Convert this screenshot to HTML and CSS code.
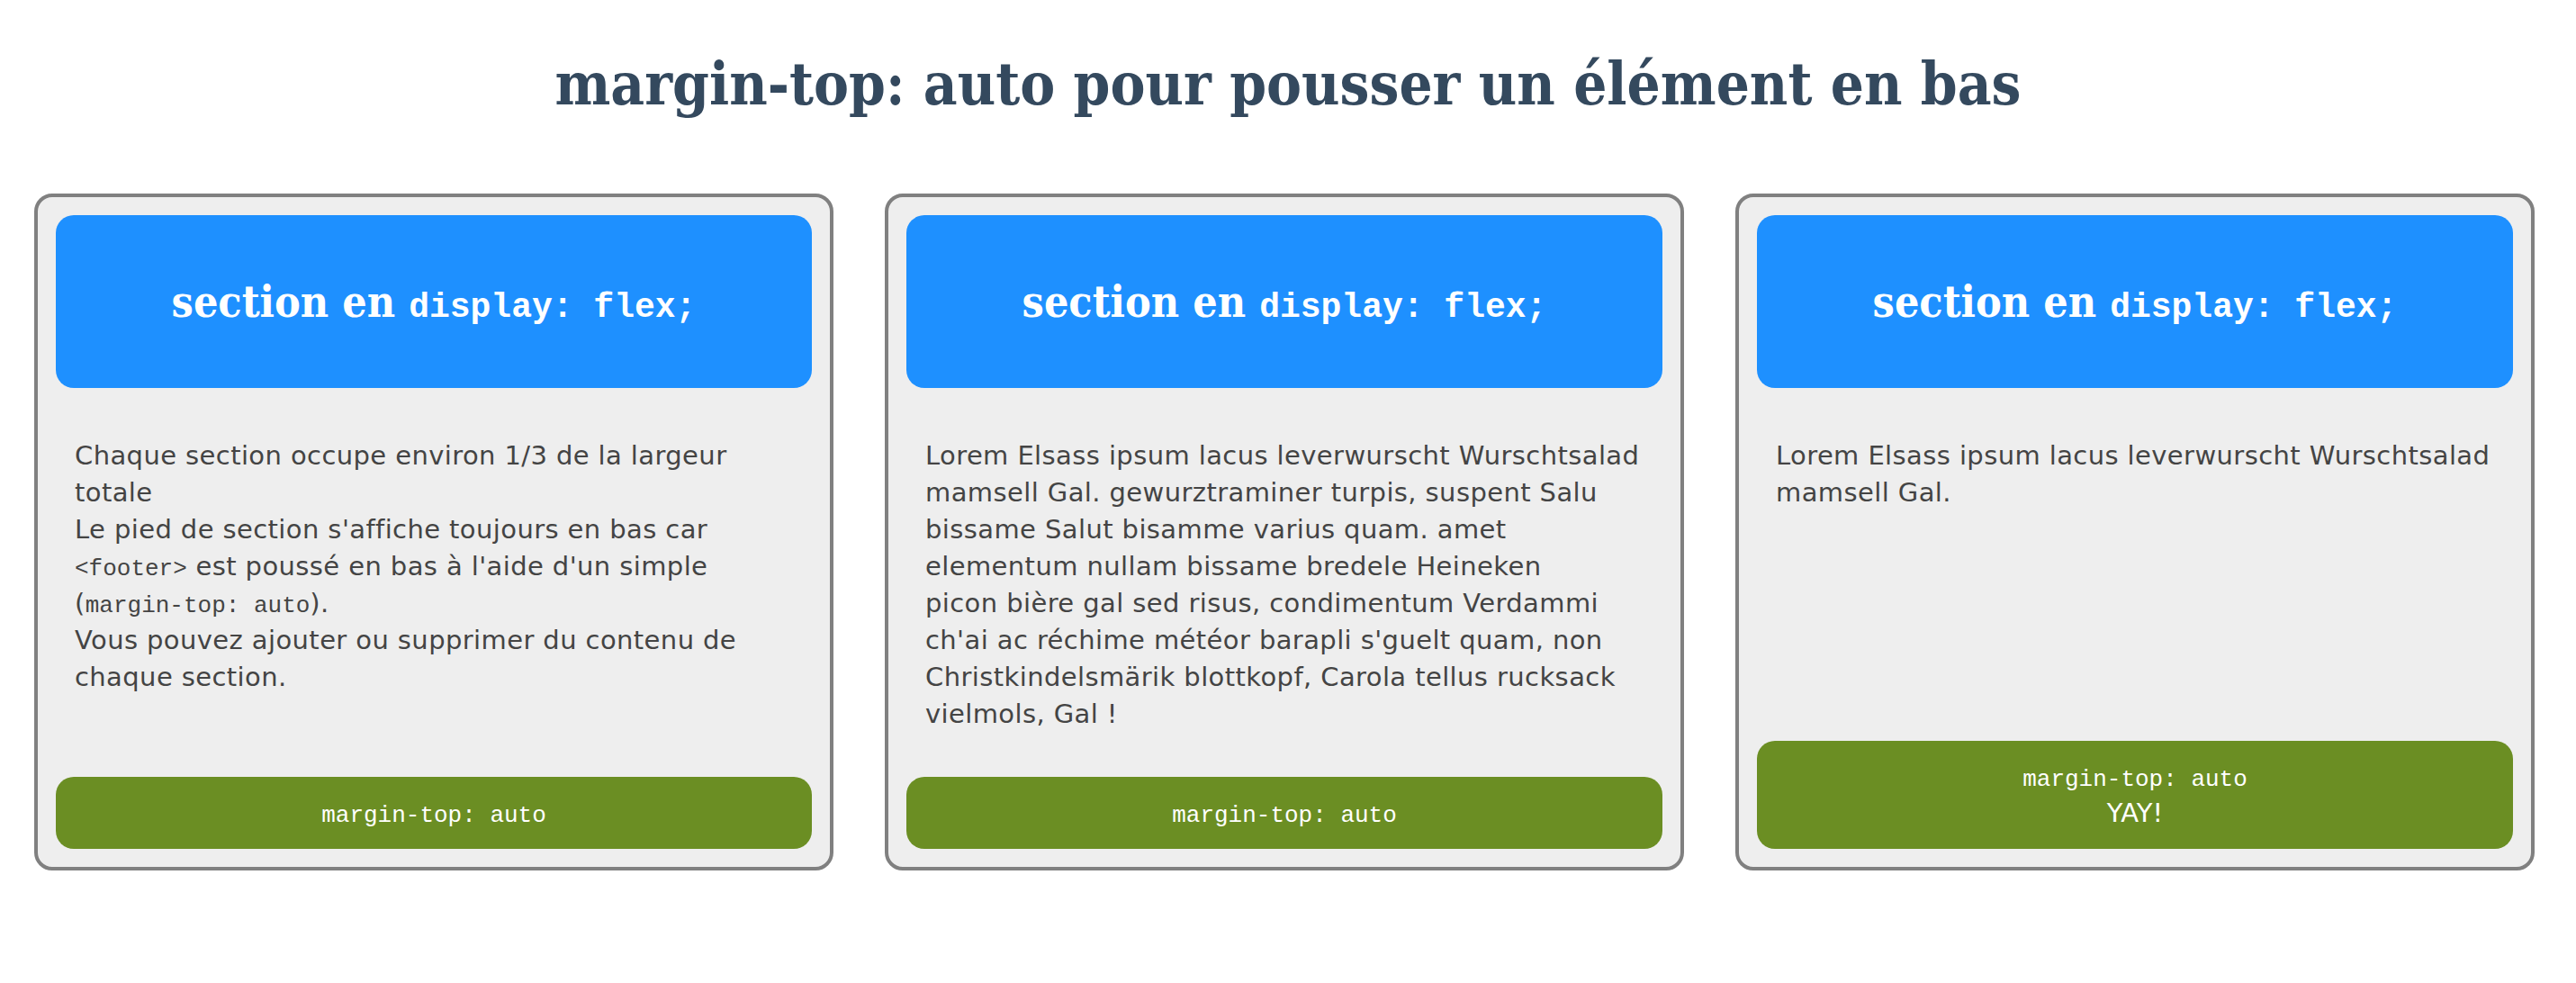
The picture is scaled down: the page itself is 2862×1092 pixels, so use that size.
FILE: index.html
```html
<!DOCTYPE html>
<html lang="fr">
<head>
<meta charset="utf-8">
<title>margin-top: auto</title>
<link rel="stylesheet" href="styles.css">
</head>
<body>
<h1 class="title">margin-top: auto pour pousser un élément en bas</h1>
<main class="cards">
  <section class="card">
    <header class="card-head"><h2 class="card-title">section en <code>display: flex;</code></h2></header>
    <div class="card-body">Chaque section occupe environ 1/3 de la largeur<br>totale<br>Le pied de section s'affiche toujours en bas car<br><code>&lt;footer&gt;</code> est poussé en bas à l'aide d'un simple<br>(<code>margin-top: auto</code>).<br>Vous pouvez ajouter ou supprimer du contenu de<br>chaque section.</div>
    <footer class="card-foot"><code>margin-top: auto</code></footer>
  </section>
  <section class="card">
    <header class="card-head"><h2 class="card-title">section en <code>display: flex;</code></h2></header>
    <div class="card-body">Lorem Elsass ipsum lacus leverwurscht Wurschtsalad<br>mamsell Gal. gewurztraminer turpis, suspent Salu<br>bissame Salut bisamme varius quam. amet<br>elementum nullam bissame bredele Heineken<br>picon bière gal sed risus, condimentum Verdammi<br>ch'ai ac réchime météor barapli s'guelt quam, non<br>Christkindelsmärik blottkopf, Carola tellus rucksack<br>vielmols, Gal !</div>
    <footer class="card-foot"><code>margin-top: auto</code></footer>
  </section>
  <section class="card">
    <header class="card-head"><h2 class="card-title">section en <code>display: flex;</code></h2></header>
    <div class="card-body">Lorem Elsass ipsum lacus leverwurscht Wurschtsalad mamsell Gal.</div>
    <footer class="card-foot"><code>margin-top: auto</code><br>YAY!</footer>
  </section>
</main>
</body>
</html>
```
FILE: styles.css
```css
html, body {
  margin: 0;
  background: #fff;
}
body {
  font-family: "DejaVu Sans", sans-serif;
  color: #444;
}
.title {
  margin: 0;
  padding-top: 48px;
  text-align: center;
  font-family: "DejaVu Serif Condensed", "DejaVu Serif", serif;
  font-weight: bold;
  font-size: 65px;
  line-height: 90px;
  color: #34495e;
}
.cards {
  display: flex;
  gap: 57px;
  padding: 0 46px 0 38px;
  margin-top: 77px;
}
.card {
  flex: 1;
  display: flex;
  flex-direction: column;
  background: #eee;
  border: 4px solid #808080;
  border-radius: 20px;
  padding: 20px;
}
.card-head {
  height: 192px;
  display: flex;
  align-items: center;
  justify-content: center;
  background: #1e90ff;
  border-radius: 20px;
  color: #fff;
}
.card-title {
  margin: 0;
  font-family: "DejaVu Serif Condensed", "DejaVu Serif", serif;
  font-weight: bold;
  font-size: 48px;
}
.card-title code {
  font-family: "Liberation Mono", monospace;
  font-size: 38px;
  font-weight: bold;
}
.card-body {
  margin: 55px 0 49px;
  padding-left: 21px;
  font-size: 29px;
  letter-spacing: 0.4px;
  line-height: 41px;
}
.card-body code {
  font-family: "Liberation Mono", monospace;
  font-size: 26px;
  letter-spacing: 0;
  line-height: 1;
}
.card-foot {
  margin-top: auto;
  padding: 20px;
  background: #6b8e23;
  border-radius: 20px;
  color: #fff;
  text-align: center;
  font-size: 29px;
  line-height: 40px;
}
.card-foot code {
  font-family: "Liberation Mono", monospace;
  font-size: 26px;
  line-height: 1;
}
```
